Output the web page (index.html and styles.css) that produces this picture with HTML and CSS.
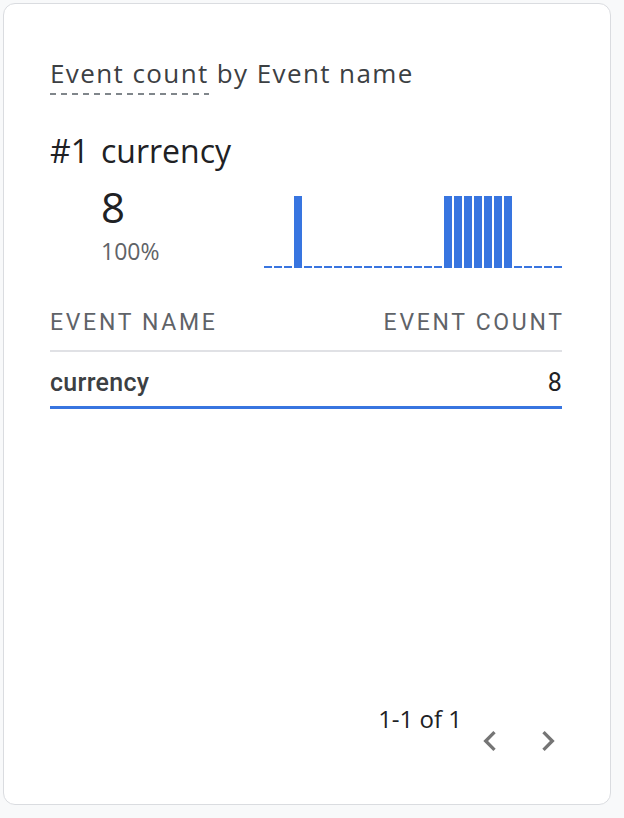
FILE: index.html
```html
<!DOCTYPE html>
<html>
<head>
<meta charset="utf-8">
<link rel="stylesheet" href="styles.css">
</head>
<body>
<div class="card">
  <div class="title"><span class="dashed">Event count</span> by Event name</div>
  <div class="top-row"><span class="rank">#1</span><span class="top-name">currency</span></div>
  <div class="stat-row">
    <div class="stat">
      <div class="stat-value">8</div>
      <div class="stat-pct">100%</div>
    </div>
    <div class="chart">
      <div class="bar"></div><div class="bar"></div><div class="bar"></div><div class="bar tall"></div>
      <div class="bar"></div><div class="bar"></div><div class="bar"></div><div class="bar"></div>
      <div class="bar"></div><div class="bar"></div><div class="bar"></div><div class="bar"></div>
      <div class="bar"></div><div class="bar"></div><div class="bar"></div><div class="bar"></div>
      <div class="bar"></div><div class="bar"></div><div class="bar tall"></div><div class="bar tall"></div>
      <div class="bar tall"></div><div class="bar tall"></div><div class="bar tall"></div><div class="bar tall"></div>
      <div class="bar tall"></div><div class="bar"></div><div class="bar"></div><div class="bar"></div>
      <div class="bar"></div><div class="bar"></div>
    </div>
  </div>
  <div class="table-head"><span>Event name</span><span class="head-right">Event count</span></div>
  <div class="table-row"><span class="row-name">currency</span><span class="row-val">8</span></div>
  <div class="pager">
    <span class="pager-text">1-1 of 1</span>
    <svg class="chev" viewBox="0 0 24 24"><path d="M15.41 7.41L14 6l-6 6 6 6 1.41-1.41L10.83 12z"/></svg>
    <svg class="chev" viewBox="0 0 24 24"><path d="M8.59 16.59L10 18l6-6-6-6-1.41 1.41L13.17 12z"/></svg>
  </div>
</div>
</body>
</html>
```

FILE: styles.css
```css
html, body {
  margin: 0;
  padding: 0;
  background: #f8f9fa;
}
.card {
  box-sizing: border-box;
  width: 608px;
  height: 802px;
  margin: 3px 0 0 3px;
  background: #fff;
  border: 1px solid #dadce0;
  border-radius: 12px;
  padding: 0 48px 43px 46px;
  display: flex;
  flex-direction: column;
}
.title {
  margin-top: 53px;
  font-family: "Open Sans", sans-serif;
  font-size: 26px;
  line-height: 32px;
  letter-spacing: 1.4px;
  color: #3c4043;
  white-space: nowrap;
}
.dashed {
  padding-bottom: 4px;
  background-image: repeating-linear-gradient(to right, #80868b 0 6px, transparent 6px 11px);
  background-size: 100% 2px;
  background-position: left bottom;
  background-repeat: no-repeat;
}
.top-row {
  margin-top: 42px;
  font-family: "Open Sans", sans-serif;
  font-size: 32px;
  line-height: 40px;
  color: #202124;
  display: flex;
  gap: 12px;
}
.stat-row {
  margin-top: 12px;
  display: flex;
  align-items: flex-start;
}
.stat {
  margin-left: 51px;
}
.stat-value {
  font-family: "Open Sans", sans-serif;
  font-size: 42px;
  line-height: 48px;
  color: #202124;
}
.stat-pct {
  margin-top: 6px;
  font-family: "Open Sans", sans-serif;
  font-size: 23px;
  line-height: 28px;
  color: #5f6368;
}
.chart {
  margin-left: auto;
  margin-top: 13px;
  height: 72px;
  display: flex;
  align-items: flex-end;
  gap: 2px;
}
.bar {
  width: 8px;
  height: 2px;
  background: #3875e0;
}
.bar.tall {
  height: 72px;
}
.table-head {
  margin-top: 43px;
  display: flex;
  justify-content: space-between;
  font-family: Roboto, sans-serif;
  font-size: 23px;
  line-height: 24px;
  letter-spacing: 2.7px;
  text-transform: uppercase;
  color: #5f6368;
  padding-bottom: 15px;
  border-bottom: 2px solid #e0e1e5;
}
.head-right {
  margin-right: -2.7px;
}
.table-row {
  padding-top: 17px;
  padding-bottom: 9px;
  display: flex;
  justify-content: space-between;
  font-family: Roboto, sans-serif;
  font-size: 25px;
  line-height: 28px;
  font-weight: 500;
  letter-spacing: 0.3px;
  color: #3c4043;
  border-bottom: 3px solid #3875e0;
}
.row-val {
  font-weight: 400;
  color: #202124;
}
.pager {
  margin-top: auto;
  margin-right: -6px;
  display: flex;
  justify-content: flex-end;
  align-items: flex-start;
  gap: 18px;
}
.pager-text {
  font-family: "Open Sans", sans-serif;
  font-size: 24px;
  line-height: 32px;
  color: #202124;
  margin-right: -10px;
}
.chev {
  width: 40px;
  height: 40px;
  margin-top: 18px;
  fill: #757575;
}
```
